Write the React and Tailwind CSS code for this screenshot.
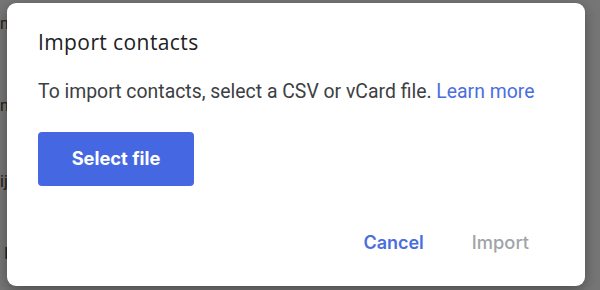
import { useState } from "react";

const backdropLines = [
  { text: "n", className: "mt-[14px]" },
  { text: "na", className: "mt-[62px]" },
  { text: "ij", className: "mt-[56px]" },
  { text: "I", className: "mt-[52px] ml-[4px]" },
];

const ImportContactsDialog = () => {
  const [fileName, setFileName] = useState("");

  return (
    <div className="relative w-[600px] h-[290px] overflow-hidden bg-[#767676] font-['Roboto',sans-serif]">
      {/* page behind the scrim, mostly covered by the dialog */}
      <div className="flex flex-col items-start text-[16px] leading-[20px] text-[#1c1c1c]">
        {backdropLines.map((line) => (
          <span key={line.text} className={line.className}>
            {line.text}
          </span>
        ))}
      </div>

      <div className="absolute left-[7px] top-[3px] w-[578px] h-[283px] flex flex-col rounded-[9px] bg-white shadow-[0_4px_14px_rgba(0,0,0,0.35)] pl-[31px] pr-[56px]">
        <h2 className="mt-[26px] text-[21px] leading-[26px] tracking-[0.4px] text-[#202124] font-['Open_Sans',sans-serif]">
          Import contacts
        </h2>

        <p className="mt-[25px] whitespace-nowrap text-[19.4px] leading-[24px] text-[#3c4043]">
          To import contacts, select a CSV or vCard file.{" "}
          <a href="#" className="text-[#4a6ee0]">
            Learn more
          </a>
        </p>

        <div className="mt-[28px]">
          <button
            type="button"
            onClick={() => setFileName("contacts.csv")}
            className="w-[156px] h-[54px] rounded-[4px] bg-[#4568e2] text-white text-[18.3px] font-bold font-['Inter',sans-serif]"
          >
            {fileName ? fileName : "Select file"}
          </button>
        </div>

        <div className="mt-auto mb-[30px] flex justify-end items-center gap-[48px]">
          <button
            type="button"
            className="text-[18px] font-semibold text-[#4a6ee0] font-['Inter',sans-serif]"
          >
            Cancel
          </button>
          <button
            type="button"
            disabled
            className="text-[18.3px] font-medium text-[#a0a4a8] font-['Inter',sans-serif]"
          >
            Import
          </button>
        </div>
      </div>
    </div>
  );
};

export default function App() {
  return <ImportContactsDialog />;
}
